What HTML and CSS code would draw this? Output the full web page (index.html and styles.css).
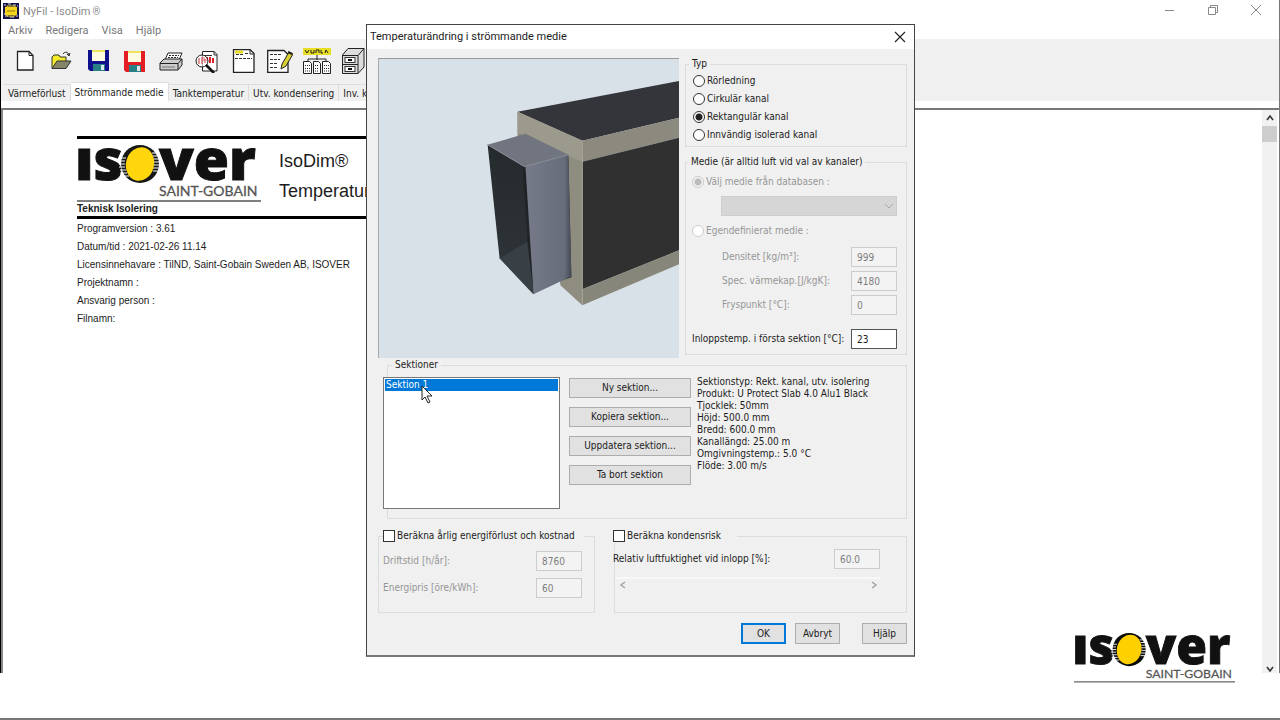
FILE: index.html
```html
<!DOCTYPE html>
<html lang="sv">
<head>
<meta charset="utf-8">
<title>NyFil - IsoDim®</title>
<link rel="stylesheet" href="styles.css">
</head>
<body>
<div class="screen">
  <main class="app">
    <header class="titlebar">
      <svg class="app-icon" width="16" height="16" viewBox="0 0 16 16"><rect width="16" height="16" fill="#15154a"/><path d="M1 2h2M5 1h3M10 2h3M2 13h3M7 14h4M13 13h2M1 11h1M14 3h1" stroke="#d8d8e8" stroke-width="1"/><rect x="2" y="4" width="12" height="8" fill="#f4d51c"/><path d="M4 4V3h8v1M4 12v1h8v-1" stroke="#f4d51c" fill="none"/><path d="M4 8h8" stroke="#8a7614" stroke-width="1"/></svg>
      <span class="app-name">NyFil - IsoDim<span class="reg">®</span></span>
      <div class="window-buttons">
        <button aria-label="Minimera"><svg width="12" height="12"><path d="M1 6.500h9" stroke="#888"/></svg></button>
        <button aria-label="Återställ"><svg width="12" height="12" fill="none" stroke="#888"><path d="M1.500 3.500h7v7h-7zM3.500 3v-1.500h7v7H9"/></svg></button>
        <button aria-label="Stäng"><svg width="12" height="12"><path d="M1 1l10 10M11 1L1 11" stroke="#888"/></svg></button>
      </div>
    </header>
    <nav class="menubar">
      <button>Arkiv</button><button>Redigera</button><button>Visa</button><button>Hjälp</button>
    </nav>
    <div class="toolbar">
      <div class="tool-group">
        <button aria-label="Ny"><svg width="24" height="24" viewBox="0 0 24 24"><path d="M4.500 2.500H16l4 4V21H4.500z" fill="#fff" stroke="#222" stroke-width="1.300"/><path d="M16 2.500v4h4" fill="none" stroke="#222"/></svg></button>
        <button aria-label="Öppna"><svg width="24" height="24" viewBox="0 0 24 24"><path d="M3 19V8l2-2h5l1 2h6v4" fill="#f4ea2a" stroke="#333"/><path d="M3 19.500L8 12h14l-5 7.500z" fill="#858568" stroke="#333"/><path d="M14 5c2-3 5-2 6 1m-2-1l2 2 1-3" fill="none" stroke="#222"/></svg></button>
      </div>
      <div class="tool-group">
        <button aria-label="Spara"><svg width="24" height="24" viewBox="0 0 24 24"><path d="M2 1h21v21H4l-2-2z" fill="#10108c"/><rect x="6" y="1" width="13" height="11" fill="#fffbe0"/><path d="M6 1h13v2H6z" fill="#eee35a"/><path d="M7 15h12v7H7z" fill="#287f86"/><rect x="15" y="16" width="3" height="5" fill="#dfe9ea"/></svg></button>
        <button aria-label="Spara som"><svg width="24" height="24" viewBox="0 0 24 24"><path d="M2 2h21v21H4l-2-2z" fill="#e41c24"/><rect x="6" y="2" width="13" height="11" fill="#fffbe0"/><path d="M6 2h13v2H6z" fill="#eee35a"/><path d="M7 16h12v7H7z" fill="#287f86"/><rect x="15" y="17" width="3" height="5" fill="#dfe9ea"/></svg></button>
      </div>
      <div class="tool-group">
        <button aria-label="Skriv ut"><svg width="24" height="24" viewBox="0 0 24 24" stroke="#222"><path d="M6 11L9 4h14l-3 7z" fill="#fff"/><path d="M10 6.500h10M9 8.500h10" stroke-dasharray="2 1"/><path d="M1 14l4-4h18v6l-4 5H1z" fill="#ccc"/><path d="M1 14.500h18v6M19 14.500L23 10" fill="none"/><path d="M3 18h13" stroke="#777" stroke-width="1"/></svg></button>
        <button aria-label="Förhandsgranska"><svg width="24" height="24" viewBox="0 0 24 24"><path d="M7.500 2.500H19l3 3V22H7.500z" fill="#fff" stroke="#222"/><path d="M9 6.500h8M19 2v4h3" stroke="#333" fill="none"/><path d="M9 12V8M12 12V8M15 14V8M18 14V9" stroke="#e02028" stroke-width="2"/><circle cx="7" cy="12" r="6" fill="#fff" fill-opacity=".65" stroke="#222"/><path d="M4 9v6M7 8v7M10 10v4" stroke="#c93636"/><path d="M11 16l8 8" stroke="#111" stroke-width="2.600"/></svg></button>
      </div>
      <div class="tool-group">
        <button aria-label="Dokument"><svg width="24" height="24" viewBox="0 0 24 24"><path d="M1.500.500H18l4 4v19H1.500z" fill="#fff" stroke="#222" stroke-width="1.300"/><path d="M18 1v4h4" fill="none" stroke="#222"/><path d="M3 3h8" stroke="#e4db26" stroke-width="3"/><path d="M4 5.500h7M13 4.500h4M3 9.500h17" stroke="#333" stroke-dasharray="3 1"/></svg></button>
        <button aria-label="Redigera dokument"><svg width="26" height="24" viewBox="0 0 26 24"><path d="M.700 1.500H17l4 4v18H.700z" fill="#fff" stroke="#222" stroke-width="1.300"/><path d="M3 5.500h11M3 10.500h10M3 14.500h8M3 18.500h7" stroke="#333" stroke-dasharray="3 1"/><path d="M15 15l7-12 4 2-7 12-5 3z" fill="#d9cf35" stroke="#222"/><path d="M21 3l4 2" stroke="#222" stroke-width="2"/></svg></button>
      </div>
      <div class="tool-group">
        <button aria-label="Struktur"><svg width="28" height="26" viewBox="0 0 28 26"><rect x="0" y="0" width="28" height="7" fill="#e8df25"/><path d="M2 2l2 3 2-3M8 2v3h3V2M13 5V2h3v3M18 2v3h2M22 5l1-3 2 3" stroke="#222" fill="none"/><path d="M14 7v5M5 14v-3h18v3" fill="none" stroke="#222"/><g fill="#fff" stroke="#222"><path d="M.500 13.500h6l2 2v10h-8zM10.500 13.500h5l2 2v10h-7zM19.500 13.500h6l2 2v10h-8z"/><path d="M2 17.500h5M2 20.500h5M2 23h5M12 17.500h4M12 20.500h4M12 23h4M21 17.500h5M21 20.500h5M21 23h5" stroke-dasharray="1 1"/></g></svg></button>
        <button aria-label="Arkivskåp"><svg width="24" height="28" viewBox="0 0 24 28"><path d="M1.500 8L7 1.500h16V20l-6 6.500H1.500z" fill="#ddd" stroke="#222"/><path d="M1.500 8.500H17v18M17 8.500l6-7M1.500 17.500H17" fill="none" stroke="#222"/><rect x="4" y="10.500" width="10" height="5" fill="#fff" stroke="#333"/><rect x="4" y="19.500" width="10" height="5" fill="#fff" stroke="#333"/><path d="M7 13h4M7 22h4" stroke="#111" stroke-width="2"/></svg></button>
      </div>
    </div>
    <nav class="tabs">
      <button class="tab">Värmeförlust</button><button class="tab active">Strömmande medie</button><button class="tab">Tanktemperatur</button><button class="tab">Utv. kondensering</button><button class="tab">Inv. kondensering</button>
    </nav>
    <section class="document">
      <article class="report">
        <div class="report-head">
          <div class="brand">
            <svg class="logo" viewBox="0 0 184 58" width="184" height="58" role="img" aria-label="ISOVER Saint-Gobain">
              <text class="logo-word" x="-2" y="36">ıs</text><text class="logo-word" x="82" y="36">ver</text>
              <circle cx="63" cy="20" r="19" fill="#171717"/>
              <path d="M42 14h7M42 17h6M42 20h6M42 23h6M43 26h6M43 29h7M45 32h7M75 9h6M76 12h7M77 15h6M77 18h6M77 21h6M76 24h6M76 27h5" stroke="#fff" stroke-width="1"/>
              <ellipse cx="63" cy="20" rx="14" ry="17" fill="#ffd60c" transform="rotate(14 63 20)"/>
              <text class="logo-sub" x="82" y="52">SAINT-GOBAIN</text>
              <path d="M0 57h184" stroke="#555" stroke-width="1.500"/>
            </svg>
            <p class="dept">Teknisk Isolering</p>
          </div>
          <div class="report-title"><h1>IsoDim®</h1><h2>Temperaturändring</h2></div>
        </div>
        <div class="report-meta">
          <p>Programversion : 3.61</p>
          <p>Datum/tid : 2021-02-26 11.14</p>
          <p>Licensinnehavare : TilND, Saint-Gobain Sweden AB, ISOVER</p>
          <p>Projektnamn :</p>
          <p>Ansvarig person :</p>
          <p>Filnamn:</p>
        </div>
      </article>
      <div class="scrollbar">
        <button aria-label="Upp"><svg width="10" height="10"><path d="M2 7l3-4 3 4" fill="none" stroke="#333" stroke-width="1.600"/></svg></button>
        <div class="thumb"></div>
        <button class="down" aria-label="Ned"><svg width="10" height="10"><path d="M2 3l3 4 3-4" fill="none" stroke="#333" stroke-width="1.600"/></svg></button>
      </div>
    </section>
  </main>

  <svg class="watermark" viewBox="0 0 184 58" role="img" aria-label="ISOVER Saint-Gobain">
    <text class="logo-word" x="-2" y="36">ıs</text><text class="logo-word" x="82" y="36">ver</text>
    <circle cx="63" cy="20" r="19" fill="#0a0a0a"/>
    <path d="M42 14h7M42 17h6M42 20h6M42 23h6M43 26h6M43 29h7M45 32h7M75 9h6M76 12h7M77 15h6M77 18h6M77 21h6M76 24h6M76 27h5" stroke="#fff" stroke-width="1"/>
    <ellipse cx="63" cy="20" rx="14" ry="17" fill="#ffd000" transform="rotate(14 63 20)"/>
    <text class="logo-sub" x="82" y="52">SAINT-GOBAIN</text>
    <path d="M0 57h184" stroke="#666" stroke-width="1.500"/>
  </svg>

  <form class="dialog" role="dialog" aria-labelledby="dlg-title">
    <div class="dialog-title">
      <h3 id="dlg-title">Temperaturändring i strömmande medie</h3>
      <button type="button" aria-label="Stäng"><svg width="12" height="12"><path d="M1 1l10 10M11 1L1 11" stroke="#222" stroke-width="1.200"/></svg></button>
    </div>
    <div class="dialog-body">
      <div class="top-row">
        <svg class="preview" viewBox="0 0 301 300" role="img" aria-label="Rektangulär kanal">
          <defs>
            <linearGradient id="side" x1="0" x2="1"><stop offset="0" stop-color="#777b89"/><stop offset=".85" stop-color="#686d7b"/><stop offset="1" stop-color="#454954"/></linearGradient>
            <linearGradient id="hole" x1="0" y1="0" x2="0" y2="1"><stop offset="0" stop-color="#252a2d"/><stop offset=".8" stop-color="#2d3336"/><stop offset="1" stop-color="#454c53"/></linearGradient>
          </defs>
          <rect width="301" height="300" fill="#d9e1e8"/>
          <path d="M139 53L301 22v37L204 82z" fill="#34353a"/>
          <path d="M139 53l65 29v165l-22-20-8-60-35-70z" fill="#8f8d80"/>
          <path d="M139 53l65 29v21l-65-29z" fill="#9c9a8c"/>
          <path d="M204 82l97-23v20l-97 24z" fill="#8c8a7e"/>
          <path d="M204 103l97-24v113l-97 39z" fill="#303031"/>
          <path d="M204 231l97-39v14l-97 41z" fill="#87867a"/>
          <path d="M204 82v165" stroke="#a6a496"/>
          <path d="M148 76l42 22 3 121-9 3V105z" fill="#28292b"/>
          <path d="M109 86l38-11 43 21-44 12z" fill="#71757f"/>
          <path d="M146 108l44-12 3 122-38 18z" fill="url(#side)"/>
          <path d="M109 86l37 22 9 128-34-36z" fill="url(#hole)"/>
          <path d="M121 200l28-17 6 53z" fill="#383f45"/>
          <path d="M144 108l5 75 6 53-8-128z" fill="#202427"/>
          <path d="M109 86l37 22 44-12" fill="none" stroke="#898d98"/>
        </svg>
        <div class="options">
          <fieldset class="type-group">
            <legend>Typ</legend>
            <label class="choice"><input type="radio" name="typ">Rörledning</label>
            <label class="choice"><input type="radio" name="typ">Cirkulär kanal</label>
            <label class="choice"><input type="radio" name="typ" checked>Rektangulär kanal</label>
            <label class="choice"><input type="radio" name="typ">Innvändig isolerad kanal</label>
          </fieldset>
          <fieldset class="medium-group">
            <legend>Medie (är alltid luft vid val av kanaler)</legend>
            <label class="choice off"><input type="radio" name="medie" checked disabled>Välj medie från databasen :</label>
            <div class="select-wrap"><select disabled aria-label="Medie"><option></option></select><svg width="10" height="10"><path d="M1 3l4 4 4-4" fill="none" stroke="#aaa"/></svg></div>
            <label class="choice off"><input type="radio" name="medie" disabled>Egendefinierat medie :</label>
            <div class="props">
              <div class="field off"><label for="dens">Densitet [kg/m³]:</label><input id="dens" type="text" value="999" disabled></div>
              <div class="field off"><label for="heat">Spec. värmekap.[J/kgK]:</label><input id="heat" type="text" value="4180" disabled></div>
              <div class="field off"><label for="frys">Fryspunkt [°C]:</label><input id="frys" type="text" value="0" disabled></div>
            </div>
            <div class="field"><label for="inl">Inloppstemp. i första sektion [°C]:</label><input id="inl" type="text" value="23"></div>
          </fieldset>
        </div>
      </div>
      <fieldset class="sections">
        <legend>Sektioner</legend>
        <div class="section-row">
          <select class="list" size="10" aria-label="Sektioner"><option selected>Sektion 1</option></select>
          <div class="section-buttons">
            <button type="button" class="btn">Ny sektion...</button>
            <button type="button" class="btn">Kopiera sektion...</button>
            <button type="button" class="btn">Uppdatera sektion...</button>
            <button type="button" class="btn">Ta bort sektion</button>
          </div>
          <div class="facts">
            <p>Sektionstyp: Rekt. kanal, utv. isolering</p>
            <p>Produkt: U Protect Slab 4.0 Alu1 Black</p>
            <p>Tjocklek: 50mm</p>
            <p>Höjd: 500.0 mm</p>
            <p>Bredd: 600.0 mm</p>
            <p>Kanallängd: 25.00 m</p>
            <p>Omgivningstemp.: 5.0 °C</p>
            <p>Flöde: 3.00 m/s</p>
          </div>
        </div>
      </fieldset>
      <div class="calc-row">
        <fieldset class="calc energy">
          <legend><label class="choice"><input type="checkbox">Beräkna årlig energiförlust och kostnad</label></legend>
          <div class="field off"><label for="drift">Driftstid [h/år]:</label><input id="drift" type="text" value="8760" disabled></div>
          <div class="field off"><label for="pris">Energipris [öre/kWh]:</label><input id="pris" type="text" value="60" disabled></div>
        </fieldset>
        <fieldset class="calc condense">
          <legend><label class="choice"><input type="checkbox">Beräkna kondensrisk</label></legend>
          <div class="field"><label for="fukt">Relativ luftfuktighet vid inlopp [%]:</label><input id="fukt" type="text" value="60.0" disabled></div>
          <div class="hscroll">
            <button type="button" disabled aria-label="Minska"><svg width="8" height="8"><path d="M6 1L2 4l4 3" fill="none" stroke="#a5a5a5" stroke-width="1.500"/></svg></button>
            <button type="button" disabled aria-label="Öka"><svg width="8" height="8"><path d="M2 1l4 3-4 3" fill="none" stroke="#a5a5a5" stroke-width="1.500"/></svg></button>
          </div>
        </fieldset>
      </div>
      <div class="actions">
        <button type="button" class="btn primary">OK</button>
        <button type="button" class="btn">Avbryt</button>
        <button type="button" class="btn help">Hjälp</button>
      </div>
    </div>
  </form>
  <svg class="pointer" width="13" height="20" viewBox="0 0 13 20"><path d="M1 1v14l3-3 3 6 2-1-3-6h5z" fill="#fff" stroke="#222"/></svg>
</div>
</body>
</html>
```
FILE: styles.css
```css
* { box-sizing: border-box; }
body { margin: 0; background: #fff; color: #1c1c1c; }
p, h1, h2, h3 { margin: 0; font-weight: 400; }
button { margin: 0; padding: 0; border: 0; background: none; color: inherit; font: inherit; }
svg { display: block; }

.screen {
  position: relative;
  min-height: 100vh;
  padding-bottom: 45px;
  display: flex;
  flex-direction: column;
  overflow: hidden;
  border-bottom: 2px solid #777;
}
.app {
  flex: 1;
  display: flex;
  flex-direction: column;
  border-left: 1px solid #000;
  border-right: 1px solid #777;
  font-family: Roboto, sans-serif;
}
.titlebar { display: flex; align-items: center; height: 22px; padding: 0 17px 0 2px; }
.app-name { margin-left: 4px; flex: 1; font-size: 11px; color: #8b8b8b; }
.reg { font-size: 10px; margin-left: 2px; }
.window-buttons { display: flex; gap: 31px; }
.window-buttons svg { margin-top: -2px; }
.menubar { display: flex; gap: 13px; padding: 0 7px; height: 17px; font-size: 11px; line-height: 18px; color: #777; }

.toolbar { display: flex; gap: 1px; padding: 0 6px; height: 43px; background: #f0f0f0; }
.tool-group { display: flex; }
.tool-group button { width: 36px; display: flex; align-items: center; justify-content: center; }

.tabs {
  display: flex;
  align-items: flex-end;
  height: 19px;
  padding-left: 3px;
  background: #f0f0f0;
  font-family: "DejaVu Sans Condensed", "DejaVu Sans", sans-serif;
  font-size: 10px;
  white-space: nowrap;
}
.tab { height: 17px; padding: 0 4px; border: 1px solid #ddd; border-bottom: 0; border-left: 0; }
.tab.active { height: 19px; background: #fff; }

.document { flex: 1; display: flex; justify-content: space-between; margin-top: 7px; border-top: 2px solid #777; border-left: 2px solid #888; font-family: "Liberation Sans", Arial, sans-serif; }
.report { flex: 0 1 640px; padding: 26px 0 0 74px; }
.report-head { display: flex; gap: 18px; border-top: 3px solid #000; border-bottom: 3px solid #000; }
.brand { padding-top: 5px; }
.logo { overflow: visible; }
.logo-word { font: 900 57px "Noto Sans", "Open Sans", sans-serif; fill: #111; stroke: #111; stroke-width: 1px; }
.logo-sub { font: 400 14px Lato, sans-serif; fill: #555; stroke: #555; stroke-width: 0.3px; }
.dept { font-size: 10px; font-weight: 700; line-height: 14px; }
.report-title h1, .report-title h2 { font-size: 18px; line-height: 30px; }
.report-title { padding-top: 7px; }
.report-meta { padding-top: 1px; font-size: 10px; line-height: 18px; }

.scrollbar { display: flex; flex-direction: column; align-items: stretch; width: 15px; margin-right: 2px; background: #f1f1f1; }
.scrollbar button { height: 16px; display: flex; align-items: center; justify-content: center; }
.thumb { height: 16px; background: #cdcdcd; }
.scrollbar .down { margin-top: auto; height: 8px; }

.watermark { position: absolute; right: 45px; bottom: 35px; width: 161px; overflow: visible; }

.dialog {
  position: absolute;
  top: 24px;
  left: 366px;
  width: 549px;
  border: 1px solid #444;
  border-bottom: 2px solid #777;
  background: #f0f0f0;
  font-family: "DejaVu Sans Condensed", "DejaVu Sans", sans-serif;
  font-size: 10px;
  line-height: 12px;
}
.dialog-title { display: flex; justify-content: space-between; align-items: center; height: 24px; padding: 0 8px 0 3px; background: #fff; }
.dialog-title h3 { font-family: Roboto, sans-serif; font-size: 11px; }
.dialog-body { padding: 9px 7px 11px 11px; }
fieldset { margin: 0; min-width: 0; border: 1px solid #dcdcdc; }
legend { padding: 0 3px; }

.top-row { display: grid; grid-template-columns: 301px 1fr; gap: 6px; }
.preview { width: 301px; height: 300px; border-top: 1px solid #999; border-left: 1px solid #aaa; }
.options { display: flex; flex-direction: column; gap: 9px; }
.type-group { padding: 2px 7px; }
.medium-group { padding: 5px 9px 5px 6px; }
.type-group legend, .medium-group legend { margin-left: -4px; }
.choice { display: flex; align-items: center; height: 18px; gap: 2px; white-space: nowrap; }
.off, .off input { color: #969696; }

input[type="radio"], input[type="checkbox"] { appearance: none; margin: 0; width: 12px; height: 12px; border: 1px solid #333; background: #fff; }
input[type="radio"] { border-radius: 50%; }
input[type="radio"]:checked { background: radial-gradient(circle, #222 0 3px, #fff 4px); }
input[type="radio"]:disabled { border-color: #ccc; }
input[type="radio"]:checked:disabled { background: radial-gradient(circle, #bbb 0 3px, #f4f4f4 4px); }
input[type="text"] { width: 46px; height: 20px; padding: 0 5px; border: 1px solid #555; background: #fff; font: inherit; color: #1c1c1c; }
input[type="text"]:disabled { border-color: #ccc; background: #f3f3f3; color: #7d7d7d; }

.select-wrap { position: relative; margin: 5px 0 6px 29px; }
.select-wrap select { display: block; appearance: none; width: 100%; height: 20px; border: 1px solid #bfbfbf; border-radius: 0; background: #ccc; }
.select-wrap svg { position: absolute; right: 3px; top: 5px; }
.props { display: flex; flex-direction: column; gap: 4px; margin: 7px 0 14px 30px; }
.field { display: flex; align-items: center; justify-content: space-between; white-space: nowrap; }

.sections { margin: 1px 0 10px 9px; padding: 6px 8px 9px 0; }
.sections legend { margin-left: 4px; }
.section-row { display: flex; margin-left: -5px; }
.list { width: 177px; height: 132px; padding: 1px 0; border: 1px solid #777; border-radius: 0; background: #fff; font: inherit; overflow: hidden; }
.list option { padding: 0 1px; min-height: 12px; line-height: 12px; margin: 0 1px; }
.list option:checked { background: #0078d7 linear-gradient(#0078d7, #0078d7); color: #fff; }
.section-buttons { display: flex; flex-direction: column; gap: 9px; width: 122px; margin: 1px 6px 0 9px; }
.btn { height: 20px; border: 1px solid #adadad; background: #e1e1e1; }
.facts { margin-top: -1px; }

.calc-row { display: grid; grid-template-columns: 217px 1fr; gap: 19px; align-items: stretch; }
.calc legend { padding: 0; }
.calc .choice { height: 14px; }
.energy { padding: 8px 12px 14px 4px; }
.energy legend { padding-right: 9px; }
.energy .field + .field { margin-top: 7px; }
.condense { padding: 6px 26px 0 0; }
.condense legend { padding-right: 16px; margin-left: -2px; }
.condense > .field { margin-left: -2px; }
.hscroll { display: flex; justify-content: space-between; margin-top: 8px; padding: 2px 2px 3px 4px; border-top: 2px solid #f8f8f8; }

.actions { display: flex; justify-content: flex-end; margin-top: 10px; }
.actions .btn { width: 45px; height: 21px; margin-left: 9px; }
.actions .help { margin-left: 22px; }
.actions .primary { border: 2px solid #0078d7; }

.pointer { position: absolute; left: 421px; top: 385px; }
```
